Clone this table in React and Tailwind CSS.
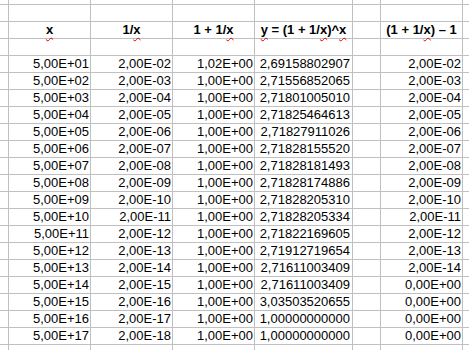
// Spreadsheet view: limit of (1 + 1/x)^x
const cols = [
  "w-[9px]",
  "w-[82px]",
  "w-[82px]",
  "w-[82px]",
  "w-[98px]",
  "w-[28px]",
  "w-[82px]",
  "w-[82px]",
];

const yValues = [
  "2,69158802907",
  "2,71556852065",
  "2,71801005010",
  "2,71825464613",
  "2,71827911026",
  "2,71828155520",
  "2,71828181493",
  "2,71828174886",
  "2,71828205310",
  "2,71828205334",
  "2,71822169605",
  "2,71912719654",
  "2,71611003409",
  "2,71611003409",
  "3,03503520655",
  "1,00000000000",
  "1,00000000000",
];

const pad = (n) => String(n).padStart(2, "0");

const rows = yValues.map((y, i) => {
  const e = i + 1;
  return [
    "",
    `5,00E+${pad(e)}`,
    `2,00E-${pad(e + 1)}`,
    i === 0 ? "1,02E+00" : "1,00E+00",
    y,
    "",
    e <= 13 ? `2,00E-${pad(e + 1)}` : "0,00E+00",
    "",
  ];
});

function X({ children }) {
  return (
    <span className="underline decoration-wavy decoration-[#e00000] decoration-1 underline-offset-[3px]">
      {children}
    </span>
  );
}

const headers = [
  "",
  <X>x</X>,
  <>1/<X>x</X></>,
  <>1 + 1/<X>x</X></>,
  <><X>y</X> = (1 + 1/<X>x</X>)^<X>x</X></>,
  "",
  <>(1 + 1/<X>x</X>) – 1</>,
  "",
];

function Row({ cells, height = "h-[17px]", header }) {
  return (
    <div className={`flex ${height} shrink-0`}>
      {cols.map((w, i) => (
        <div
          key={i}
          className={`${w} shrink-0 border-r border-b border-[#c0c0c0] overflow-visible whitespace-nowrap leading-[16px] ${
            header
              ? "text-center font-bold"
              : i === 4
              ? "text-right pr-[2px]"
              : "text-right pr-[1px]"
          }`}
        >
          {cells ? cells[i] : ""}
        </div>
      ))}
    </div>
  );
}

export default function App() {
  return (
    <div
      className="w-[469px] h-[350px] overflow-hidden bg-white text-black text-[13px] flex flex-col"
      style={{ fontFamily: '"Liberation Sans", Arial, sans-serif' }}
    >
      <Row height="h-[5px]" />
      <Row />
      <Row cells={headers} header />
      <Row />
      {rows.map((r, i) => (
        <Row key={i} cells={r} />
      ))}
      <Row />
    </div>
  );
}
